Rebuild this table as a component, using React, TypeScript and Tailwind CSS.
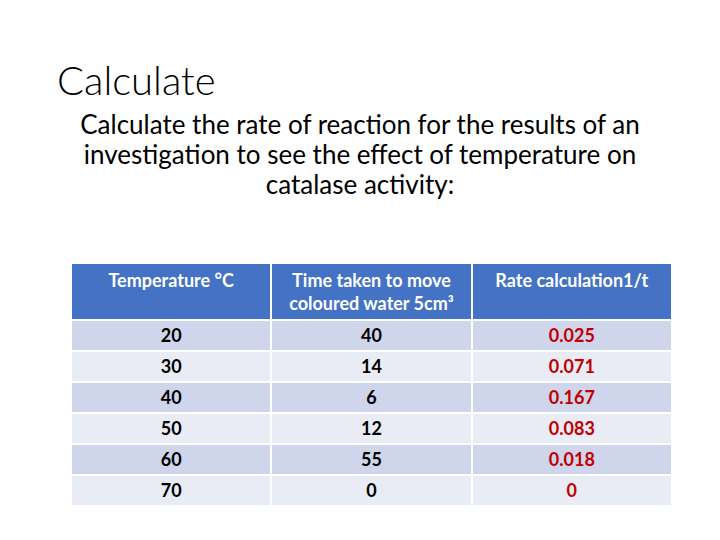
import React from "react";

const rows = [
  { temp: "20", time: "40", rate: "0.025" },
  { temp: "30", time: "14", rate: "0.071" },
  { temp: "40", time: "6", rate: "0.167" },
  { temp: "50", time: "12", rate: "0.083" },
  { temp: "60", time: "55", rate: "0.018" },
  { temp: "70", time: "0", rate: "0" },
];

const App: React.FC = () => {
  return (
    <div
      className="w-[720px] h-[540px] bg-white text-black overflow-hidden flex flex-col"
      style={{ fontFamily: "Lato, 'Open Sans', sans-serif" }}
    >
      {/* Title */}
      <h1 className="pl-[57px] pt-[56px] text-[40px] leading-[48px] font-light">
        Calculate
      </h1>

      {/* Body text */}
      <p className="mt-[5px] px-[40px] text-center text-[26px] leading-[30px]">
        Calculate the rate of reaction for the results of an
        <br />
        investigation to see the effect of temperature on
        <br />
        catalase activity:
      </p>

      {/* Table */}
      <div className="mt-[65px] ml-[72px] w-[599px] grid grid-cols-3 gap-[2px] text-[18px]">
        <div className="bg-[#4472C4] h-[55px] text-white font-bold text-center pt-[5px] leading-[23px]">
          Temperature °C
        </div>
        <div className="bg-[#4472C4] h-[55px] text-white font-bold text-center pt-[5px] leading-[23px]">
          Time taken to move
          <br />
          coloured water 5cm³
        </div>
        <div className="bg-[#4472C4] h-[55px] text-white font-bold text-center pt-[5px] leading-[23px]">
          Rate calculation1/t
        </div>

        {rows.map((r, i) => {
          const bg = i % 2 === 0 ? "bg-[#CFD5EA]" : "bg-[#E9EBF5]";
          return (
            <React.Fragment key={r.temp}>
              <div className={`${bg} h-[29px] flex items-center justify-center font-bold`}>
                {r.temp}
              </div>
              <div className={`${bg} h-[29px] flex items-center justify-center font-bold`}>
                {r.time}
              </div>
              <div className={`${bg} h-[29px] flex items-center justify-center font-bold text-[#C00000]`}>
                {r.rate}
              </div>
            </React.Fragment>
          );
        })}
      </div>
    </div>
  );
};

export default App;
